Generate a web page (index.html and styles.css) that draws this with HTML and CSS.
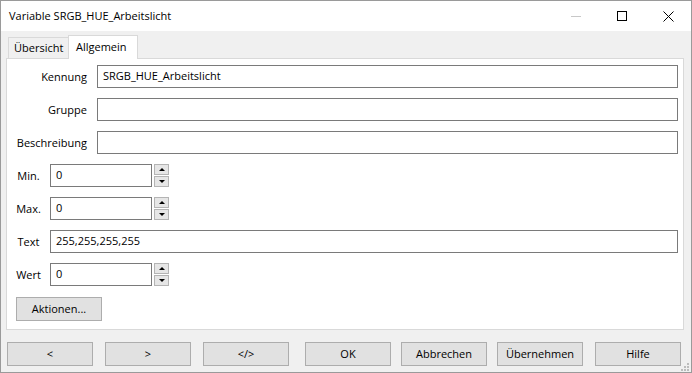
FILE: index.html
```html
<!DOCTYPE html>
<html lang="de">
<head>
<meta charset="utf-8">
<title>Variable SRGB_HUE_Arbeitslicht</title>
<link rel="stylesheet" href="styles.css">
</head>
<body>
<div class="window">
  <div class="titlebar">
    <span class="title">Variable SRGB_HUE_Arbeitslicht</span>
    <div class="caption">
      <span class="cap"><svg width="10" height="10" viewBox="0 0 10 10"><line x1="0" y1="5.5" x2="10" y2="5.5" stroke="#c8c8c8" stroke-width="1"/></svg></span>
      <span class="cap"><svg width="10" height="10" viewBox="0 0 10 10"><rect x="0.5" y="0.5" width="9" height="9" fill="none" stroke="#000" stroke-width="1"/></svg></span>
      <span class="cap"><svg width="11" height="11" viewBox="0 0 11 11"><path d="M0.5 0.5 L10.5 10.5 M10.5 0.5 L0.5 10.5" stroke="#000" stroke-width="1" fill="none"/></svg></span>
    </div>
  </div>
  <div class="client">
    <div class="tabs">
      <div class="tab">Übersicht</div>
      <div class="tab active">Allgemein</div>
    </div>
    <div class="panel">
      <div class="row">
        <span class="lbl-r">Kennung</span>
        <div class="field grow">SRGB_HUE_Arbeitslicht</div>
      </div>
      <div class="row">
        <span class="lbl-r">Gruppe</span>
        <div class="field grow"></div>
      </div>
      <div class="row">
        <span class="lbl-r">Beschreibung</span>
        <div class="field grow"></div>
      </div>
      <div class="row">
        <span class="lbl-c">Min.</span>
        <div class="field num">0</div>
        <div class="spin"><span class="sb"><i class="up"></i></span><span class="sb"><i class="down"></i></span></div>
      </div>
      <div class="row">
        <span class="lbl-c">Max.</span>
        <div class="field num">0</div>
        <div class="spin"><span class="sb"><i class="up"></i></span><span class="sb"><i class="down"></i></span></div>
      </div>
      <div class="row">
        <span class="lbl-c">Text</span>
        <div class="field grow">255,255,255,255</div>
      </div>
      <div class="row">
        <span class="lbl-c">Wert</span>
        <div class="field num">0</div>
        <div class="spin"><span class="sb"><i class="up"></i></span><span class="sb"><i class="down"></i></span></div>
      </div>
      <div class="btn aktionen">Aktionen...</div>
    </div>
    <div class="buttons">
      <div class="btn">&lt;</div>
      <div class="btn">&gt;</div>
      <div class="btn">&lt;/&gt;</div>
      <div class="btn ok">OK</div>
      <div class="btn tight">Abbrechen</div>
      <div class="btn tight">Übernehmen</div>
      <div class="btn">Hilfe</div>
    </div>
    <svg class="grip" width="9" height="9" viewBox="0 0 9 9">
      <rect x="6" y="0" width="2" height="2" fill="#bcbcbc"/>
      <rect x="3" y="3" width="2" height="2" fill="#bcbcbc"/>
      <rect x="6" y="3" width="2" height="2" fill="#bcbcbc"/>
      <rect x="0" y="6" width="2" height="2" fill="#bcbcbc"/>
      <rect x="3" y="6" width="2" height="2" fill="#bcbcbc"/>
      <rect x="6" y="6" width="2" height="2" fill="#bcbcbc"/>
    </svg>
  </div>
</div>
</body>
</html>
```

FILE: styles.css
```css
* { box-sizing: border-box; }
html, body { margin: 0; padding: 0; }
body {
  width: 692px;
  height: 373px;
  overflow: hidden;
  font-family: "Open Sans", "Noto Sans", sans-serif;
  font-size: 11px;
  color: #000;
  background: #f0f0f0;
}
.window {
  width: 692px;
  height: 373px;
  border: 1px solid #9a9a9a;
  display: flex;
  flex-direction: column;
}
.titlebar {
  height: 30px;
  background: #fff;
  display: flex;
  align-items: center;
  justify-content: space-between;
  flex: none;
}
.title {
  padding-left: 8px;
  font-size: 11px;
  padding-bottom: 1px;
}
.caption { display: flex; height: 30px; }
.cap {
  width: 46px;
  height: 30px;
  display: flex;
  align-items: center;
  justify-content: center;
}
.cap svg { display: block; }
.client {
  position: relative;
  flex: 1;
  background: #f0f0f0;
  padding: 4px 7px 0 5px;
  display: flex;
  flex-direction: column;
}
.tabs {
  display: flex;
  align-items: flex-end;
  height: 23px;
  padding-left: 2px;
  position: relative;
  z-index: 1;
}
.tab {
  height: 21px;
  width: 61px;
  border: 1px solid #d9d9d9;
  border-bottom: none;
  background: #f0f0f0;
  padding-left: 5px;
  line-height: 20px;
}
.tab.active {
  height: 24px;
  width: 70px;
  margin-left: -1px;
  margin-bottom: -1px;
  background: #fff;
  padding-left: 7px;
  line-height: 21px;
}
.panel {
  height: 272px;
  background: #fff;
  border: 1px solid #d9d9d9;
  padding: 6px 5px 0 0;
  display: flex;
  flex-direction: column;
  gap: 10px;
}
.row {
  display: flex;
  height: 23px;
  align-items: center;
}
.lbl-r {
  width: 80px;
  margin-right: 10px;
  text-align: right;
}
.lbl-c {
  width: 43px;
  text-align: center;
}
.field {
  height: 23px;
  border: 1px solid #7a7a7a;
  background: #fff;
  padding-left: 5px;
  line-height: 20px;
}
.grow { flex: 1; }
.num { width: 102px; }
.spin {
  margin-left: 2px;
  width: 15px;
  height: 23px;
  display: flex;
  flex-direction: column;
  gap: 1px;
}
.sb {
  flex: 1;
  background: #e6e6e6;
  border: 1px solid #b4b4b4;
  display: flex;
  align-items: center;
  justify-content: center;
}
.sb i { display: block; width: 0; height: 0; border-left: 3px solid transparent; border-right: 3px solid transparent; }
.sb i.up { border-bottom: 3px solid #000; }
.sb i.down { border-top: 3px solid #000; }
.btn {
  width: 86px;
  height: 24px;
  background: #e1e1e1;
  border: 1px solid #adadad;
  display: flex;
  align-items: center;
  justify-content: center;
  padding-bottom: 1px;
}
.aktionen {
  margin-left: 9px;
  margin-top: 1px;
}
.buttons {
  display: flex;
  gap: 12px;
  margin-top: 12px;
  padding-left: 1px;
}
.buttons .ok { margin-left: 4px; }
.buttons .tight { margin-left: -2px; }
.grip {
  position: absolute;
  right: 1px;
  bottom: 0px;
  display: block;
}
```
